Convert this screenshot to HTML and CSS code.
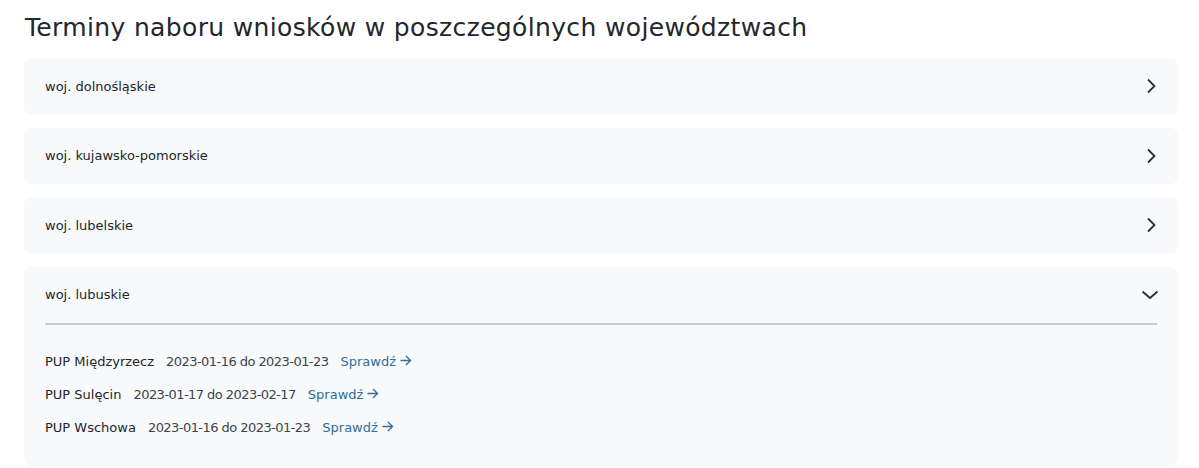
FILE: index.html
```html
<!DOCTYPE html>
<html lang="pl">
<head>
<meta charset="utf-8">
<title>Terminy naboru wniosków</title>
<link rel="stylesheet" href="styles.css">
</head>
<body>
<main class="page">
  <h1 class="title">Terminy naboru wniosków w poszczególnych województwach</h1>
  <div class="accordion">
    <div class="item">
      <div class="head"><span>woj. dolnośląskie</span>
        <svg class="chev" width="16" height="16" viewBox="0 0 16 16"><path d="M5 1.5 L11.5 8 L5 14.5" fill="none" stroke="#2a2d33" stroke-width="1.8"/></svg>
      </div>
    </div>
    <div class="item">
      <div class="head"><span>woj. kujawsko-pomorskie</span>
        <svg class="chev" width="16" height="16" viewBox="0 0 16 16"><path d="M5 1.5 L11.5 8 L5 14.5" fill="none" stroke="#2a2d33" stroke-width="1.8"/></svg>
      </div>
    </div>
    <div class="item">
      <div class="head"><span>woj. lubelskie</span>
        <svg class="chev" width="16" height="16" viewBox="0 0 16 16"><path d="M5 1.5 L11.5 8 L5 14.5" fill="none" stroke="#2a2d33" stroke-width="1.8"/></svg>
      </div>
    </div>
    <div class="item open">
      <div class="head"><span>woj. lubuskie</span>
        <svg class="chev" width="18" height="18" viewBox="0 0 18 18"><path d="M1.5 5.5 L9 12 L16.5 5.5" fill="none" stroke="#2a2d33" stroke-width="1.8"/></svg>
      </div>
      <div class="body">
        <div class="row"><span class="name">PUP Międzyrzecz</span><span class="date">2023-01-16 do 2023-01-23</span><a class="link" href="#">Sprawdź<svg class="arrow" width="12" height="11" viewBox="0 0 12 11"><path d="M0.5 5.5 H10.5 M6 1 L10.5 5.5 L6 10" fill="none" stroke="#2f6d9a" stroke-width="1.3"/></svg></a></div>
        <div class="row"><span class="name">PUP Sulęcin</span><span class="date">2023-01-17 do 2023-02-17</span><a class="link" href="#">Sprawdź<svg class="arrow" width="12" height="11" viewBox="0 0 12 11"><path d="M0.5 5.5 H10.5 M6 1 L10.5 5.5 L6 10" fill="none" stroke="#2f6d9a" stroke-width="1.3"/></svg></a></div>
        <div class="row"><span class="name">PUP Wschowa</span><span class="date">2023-01-16 do 2023-01-23</span><a class="link" href="#">Sprawdź<svg class="arrow" width="12" height="11" viewBox="0 0 12 11"><path d="M0.5 5.5 H10.5 M6 1 L10.5 5.5 L6 10" fill="none" stroke="#2f6d9a" stroke-width="1.3"/></svg></a></div>
      </div>
    </div>
  </div>
</main>
</body>
</html>
```
FILE: styles.css
```css
html, body { margin: 0; padding: 0; background: #fff; }
body { font-family: "DejaVu Sans", "Open Sans", sans-serif; color: #23262b; }
.page { padding: 12px 21px 0 24px; }
.title { margin: 0 0 14px 1px; font-size: 25px; font-weight: 400; line-height: 32px; letter-spacing: 0.35px; color: #23262b; }
.accordion { display: flex; flex-direction: column; gap: 13px; }
.item { background: #f8f9fa; border-radius: 8px; padding: 0 21px; }
.head { height: 56.6px; display: flex; align-items: center; justify-content: space-between; font-size: 13px; }
.open .head { height: 56px; border-bottom: 2px solid #c8cacd; }
.chev { margin-right: -2px; }
.body { padding: 20px 0 22px; display: flex; flex-direction: column; }
.row { height: 33px; display: flex; align-items: center; font-size: 13px; gap: 12px; }
.name { color: #23262b; }
.date { color: #40444a; letter-spacing: -0.55px; }
.link { color: #2f6d9a; text-decoration: none; display: inline-flex; align-items: center; gap: 4px; }
.arrow { margin-top: -2px; }
```
